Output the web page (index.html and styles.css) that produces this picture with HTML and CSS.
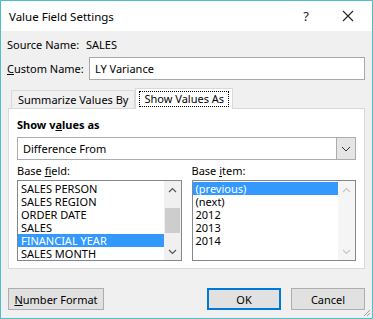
FILE: index.html
```html
<!DOCTYPE html>
<html>
<head>
<meta charset="utf-8">
<link rel="stylesheet" href="styles.css">
</head>
<body>
<div class="window">
  <div class="titlebar">
    <span class="title">Value Field Settings</span>
    <span class="help">?</span>
    <span class="close">
      <svg width="12" height="12" viewBox="0 0 12 12"><path d="M1 1L11 11M11 1L1 11" stroke="#222" stroke-width="1.1" fill="none"/></svg>
    </span>
  </div>
  <div class="content">
    <div class="row source">
      <span class="label">Source Name:</span>
      <span class="value">SALES</span>
    </div>
    <div class="row custom">
      <span class="label"><u>C</u>ustom Name:</span>
      <div class="textbox">LY Variance</div>
    </div>
    <div class="tabs">
      <div class="tab">Summarize Values By</div>
      <div class="tab active"><span class="focus">Show Values As</span></div>
    </div>
    <div class="panel">
      <div class="heading">Show v<u>a</u>lues as</div>
      <div class="combo">
        <span class="combo-text">Difference From</span>
        <span class="combo-btn">
          <svg width="10" height="6" viewBox="0 0 10 6"><path d="M1 1L5 5L9 1" stroke="#333" stroke-width="1" fill="none"/></svg>
        </span>
      </div>
      <div class="lists">
        <div class="col">
          <div class="sublabel">Base <u>f</u>ield:</div>
          <div class="listbox">
            <div class="items">
              <div class="item">SALES PERSON</div>
              <div class="item">SALES REGION</div>
              <div class="item">ORDER DATE</div>
              <div class="item">SALES</div>
              <div class="item sel">FINANCIAL YEAR</div>
              <div class="item">SALES MONTH</div>
            </div>
            <div class="scroll">
              <span class="arrow"><svg width="9" height="6" viewBox="0 0 9 6"><path d="M1 5L4.5 1.5L8 5" stroke="#555" stroke-width="1.2" fill="none"/></svg></span>
              <span class="track"><span class="thumb"></span></span>
              <span class="arrow"><svg width="9" height="6" viewBox="0 0 9 6"><path d="M1 1L4.5 4.5L8 1" stroke="#555" stroke-width="1.2" fill="none"/></svg></span>
            </div>
          </div>
        </div>
        <div class="col">
          <div class="sublabel">Base <u>i</u>tem:</div>
          <div class="listbox">
            <div class="items">
              <div class="item sel">(previous)</div>
              <div class="item">(next)</div>
              <div class="item">2012</div>
              <div class="item">2013</div>
              <div class="item">2014</div>
            </div>
            <div class="scroll disabled">
              <span class="arrow"><svg width="9" height="6" viewBox="0 0 9 6"><path d="M1 5L4.5 1.5L8 5" stroke="#c8c8c8" stroke-width="1.2" fill="none"/></svg></span>
              <span class="track"></span>
              <span class="arrow"><svg width="9" height="6" viewBox="0 0 9 6"><path d="M1 1L4.5 4.5L8 1" stroke="#c8c8c8" stroke-width="1.2" fill="none"/></svg></span>
            </div>
          </div>
        </div>
      </div>
    </div>
    <div class="buttons">
      <button class="btn numfmt"><u>N</u>umber Format</button>
      <span class="spacer"></span>
      <button class="btn ok">OK</button>
      <button class="btn">Cancel</button>
    </div>
  </div>
  <span class="grip">
    <svg width="10" height="10" viewBox="0 0 10 10"><path d="M9 3L3 9M9 6L6 9" stroke="#a0a0a0" stroke-width="1" fill="none"/></svg>
  </span>
</div>
</body>
</html>
```
FILE: styles.css
```css
* { box-sizing: border-box; }
html, body { margin: 0; padding: 0; }
body {
  font-family: "Noto Sans", "Open Sans", sans-serif;
  font-size: 11px;
  color: #000;
  background: #fff;
}
.window {
  position: relative;
  width: 373px;
  height: 319px;
  border: 1px solid #4fbfc4;
  background: #f0f0f0;
  display: flex;
  flex-direction: column;
}
.titlebar {
  height: 30px;
  background: #fff;
  display: flex;
  align-items: center;
  padding-left: 8px;
  flex: none;
}
.title { font-size: 11.5px; flex: 1; }
.help { width: 20px; margin-right: 26px; text-align: center; font-size: 13px; color: #222; }
.close { width: 12px; margin-right: 18px; display: flex; }
.content {
  flex: 1;
  display: flex;
  flex-direction: column;
  padding: 0 7px 0 6px;
}
.row { display: flex; align-items: center; }
.source { height: 25px; margin-top: 1px; }
.source .label { width: 79px; flex: none; }
.custom { height: 23px; }
.custom .label { width: 82px; flex: none; }
.textbox {
  flex: 1;
  height: 23px;
  background: #fff;
  border: 1px solid #a9a9a9;
  padding-left: 5px;
  display: flex;
  align-items: center;
}
.tabs {
  display: flex;
  align-items: flex-end;
  height: 20px;
  margin-top: 8px;
  padding-left: 4px;
  position: relative;
  z-index: 1;
}
.tab {
  height: 18px;
  padding: 0 6px;
  display: flex;
  align-items: center;
  border: 1px solid #d9d9d9;
  border-bottom: none;
  background: #f0f0f0;
}
.tab.active {
  height: 21px;
  background: #fff;
  margin-bottom: -1px;
  padding: 0 3px;
  margin-left: 0;
}
.focus {
  border: 1px dotted #000;
  padding: 0 4px;
  line-height: 14px;
}
.panel {
  background: #fff;
  border: 1px solid #d9d9d9;
  height: 161px;
  margin-left: 1px;
  padding: 5px 8px 0 8px;
}
.heading { font-weight: bold; height: 22px; line-height: 22px; }
.combo {
  margin-top: 1px;
  height: 23px;
  border: 1px solid #acacac;
  display: flex;
  align-items: stretch;
  background: #fff;
}
.combo-text { flex: 1; padding-left: 5px; line-height: 21px; }
.combo-btn {
  width: 19px;
  background: #e5e5e5;
  border-left: 1px solid #acacac;
  display: flex;
  align-items: center;
  justify-content: center;
}
.lists { display: flex; gap: 10px; margin-top: 1px; }
.col { flex: 1; display: flex; flex-direction: column; }
.sublabel { height: 19px; line-height: 19px; }
.listbox {
  height: 81px;
  border: 1px solid #828790;
  background: #fff;
  display: flex;
}
.items { flex: 1; padding-top: 1px; }
.item { height: 13px; line-height: 13px; padding-left: 3px; white-space: nowrap; }
.item.sel { background: #3399ff; color: #fff; }
.scroll {
  width: 17px;
  background: #f0f0f0;
  display: flex;
  flex-direction: column;
}
.scroll.disabled { background: #f5f5f5; }
.arrow { height: 17px; display: flex; align-items: center; justify-content: center; }
.track { flex: 1; display: flex; flex-direction: column; }
.thumb {
  margin-top: 10px;
  height: 25px;
  background: #cdcdcd;
  margin-left: 1px;
  margin-right: 1px;
}
.buttons {
  display: flex;
  margin-top: 19px;
  padding-left: 1px;
  gap: 10px;
}
.spacer { flex: 1; }
.btn {
  font-family: inherit;
  font-size: inherit;
  color: #000;
  height: 22px;
  width: 74px;
  background: #e1e1e1;
  border: 1px solid #adadad;
  padding: 0;
}
.btn.numfmt { width: 96px; }
.btn.ok { border: 2px solid #0078d7; }
.grip { position: absolute; right: 1px; bottom: 1px; display: flex; }
```
